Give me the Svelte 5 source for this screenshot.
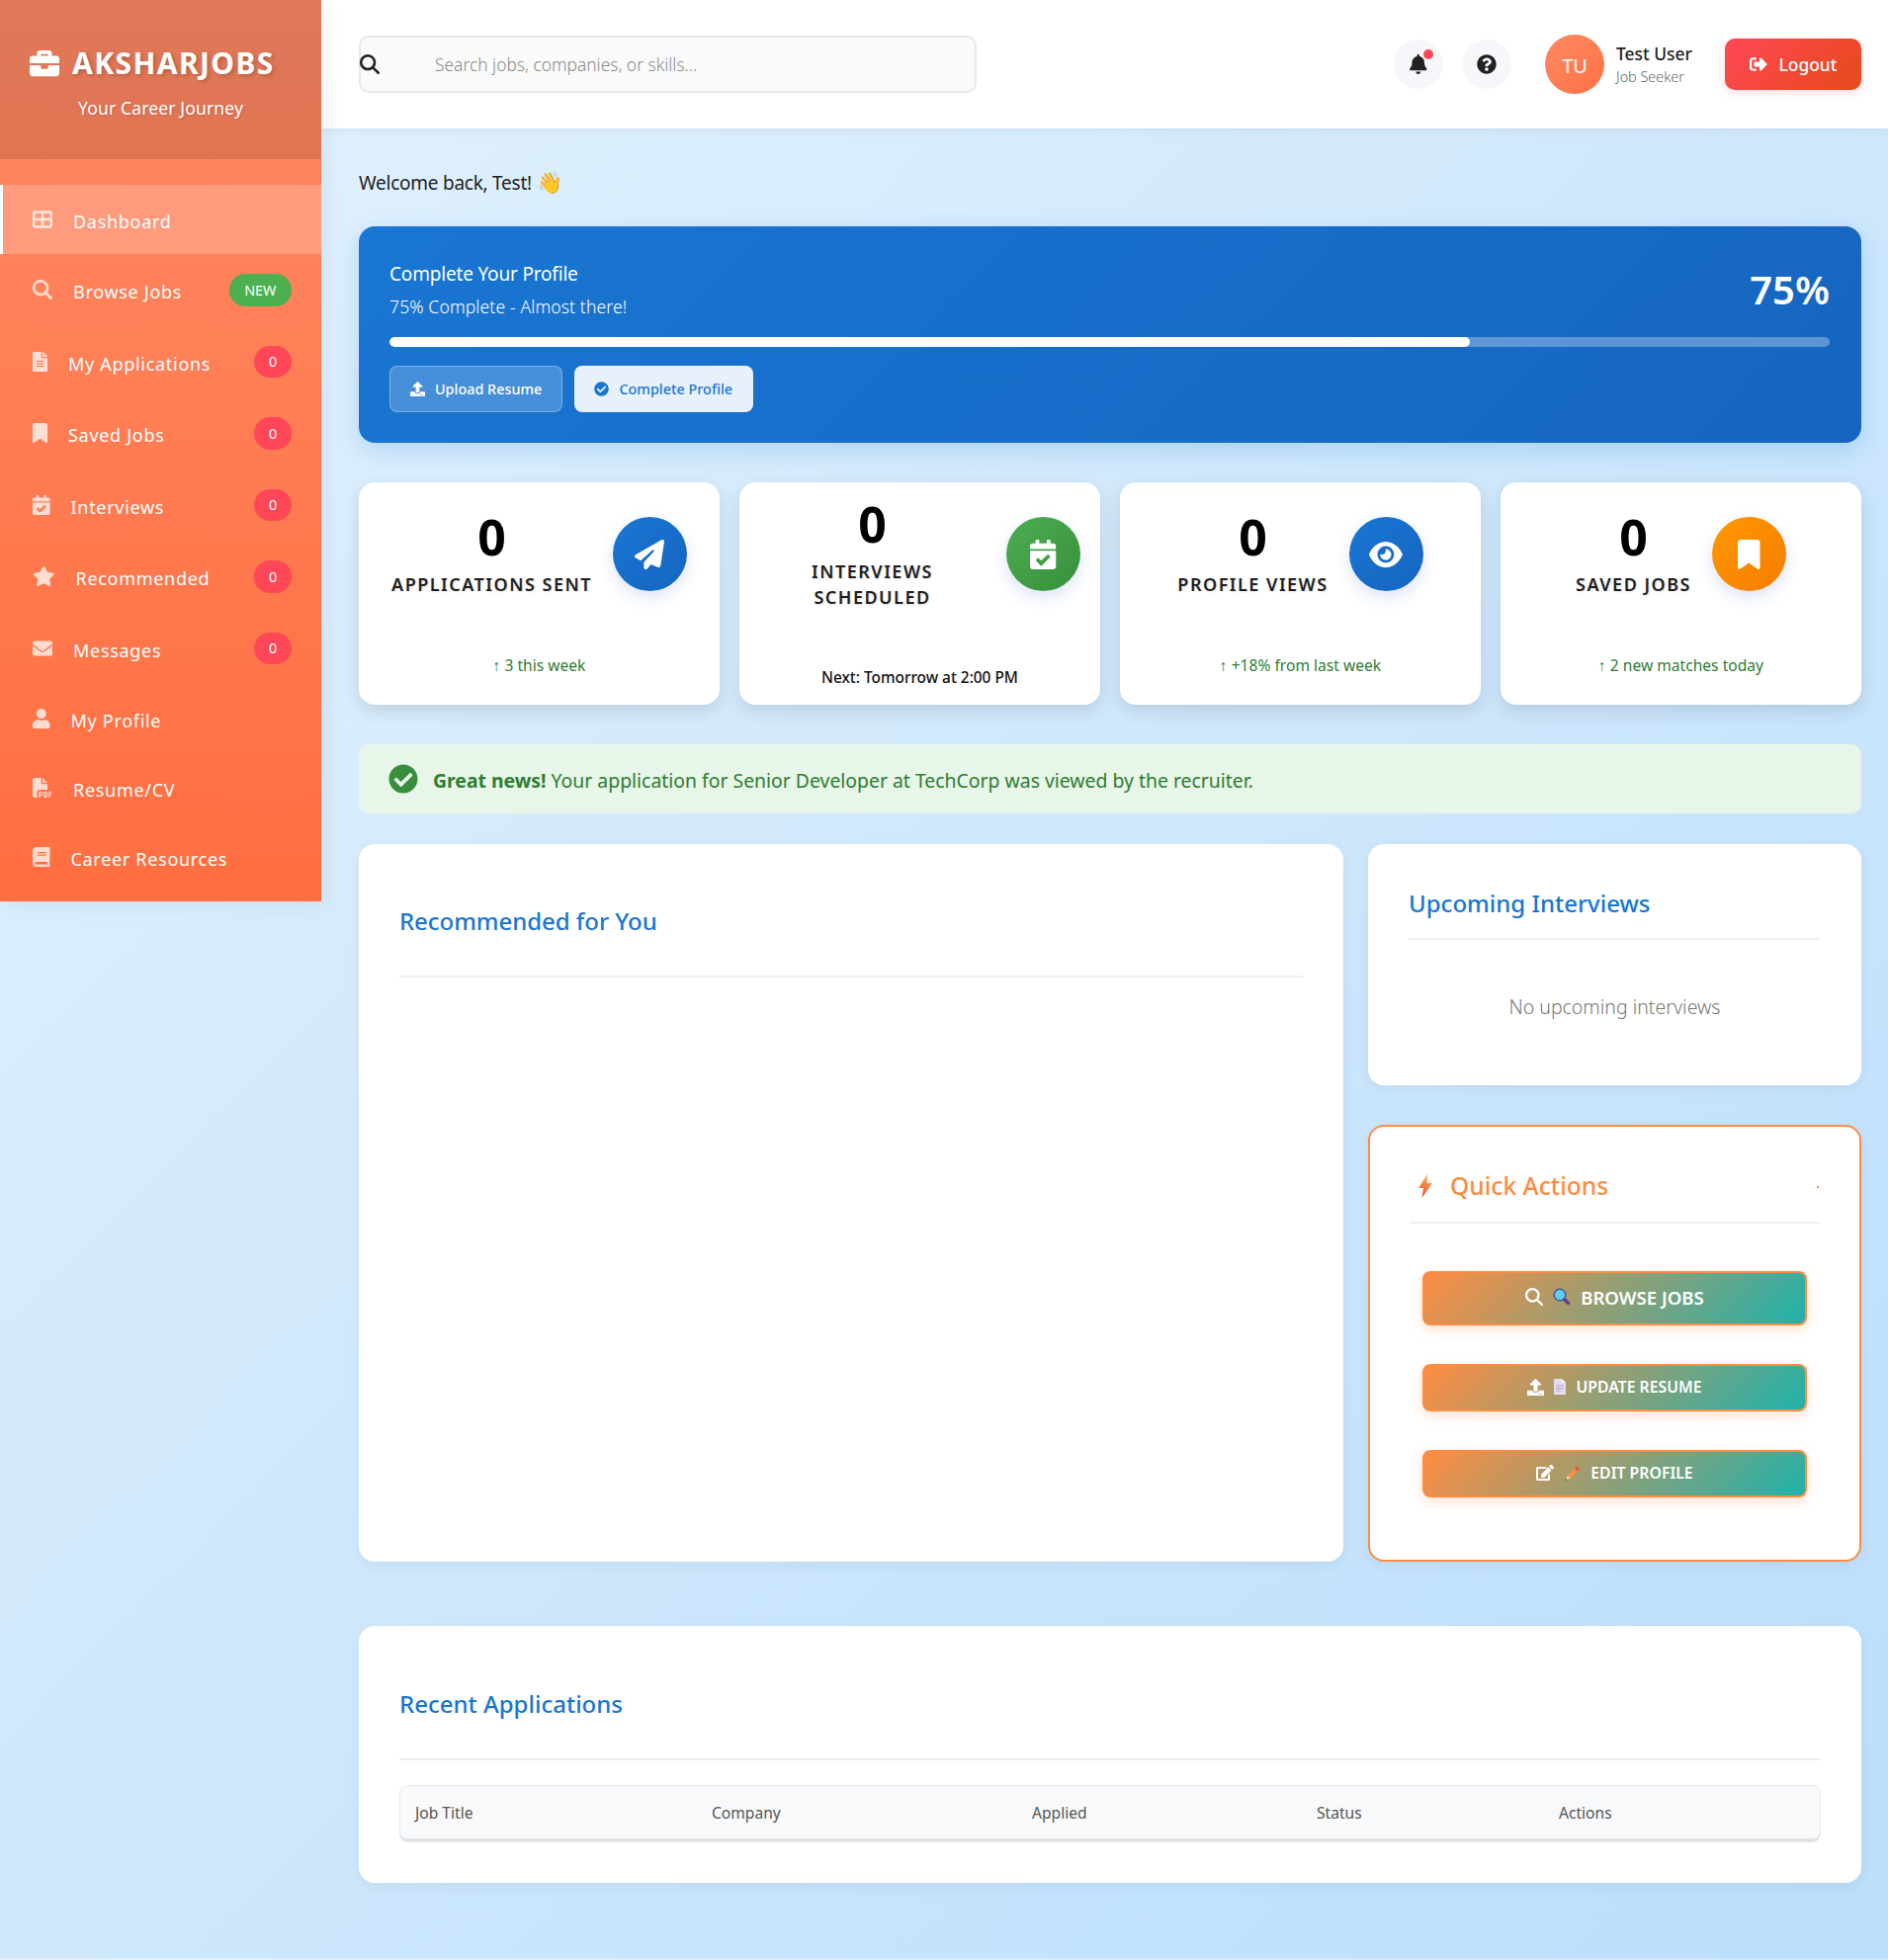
<script>
  const P = {
    briefcase: [512, 'M320 336c0 8.84-7.16 16-16 16h-96c-8.84 0-16-7.16-16-16v-48H0v144c0 25.6 22.4 48 48 48h416c25.6 0 48-22.4 48-48V288H320v48zm144-208h-80V80c0-25.6-22.4-48-48-48H176c-25.6 0-48 22.4-48 48v48H48c-25.6 0-48 22.4-48 48v80h512v-80c0-25.6-22.4-48-48-48zm-144 0H192V96h128v32z'],
    grid: [512, 'M448 96V224H288V96H448zm0 192V416H288V288H448zM224 224H64V96H224V224zM64 288H224V416H64V288zM64 32C28.7 32 0 60.7 0 96V416c0 35.3 28.7 64 64 64H448c35.3 0 64-28.7 64-64V96c0-35.3-28.7-64-64-64H64z'],
    search: [512, 'M416 208c0 45.9-14.9 88.3-40 122.7L502.6 457.4c12.5 12.5 12.5 32.8 0 45.3s-32.8 12.5-45.3 0L330.7 376c-34.4 25.2-76.8 40-122.7 40C93.1 416 0 322.9 0 208S93.1 0 208 0S416 93.1 416 208zM208 352a144 144 0 1 0 0-288 144 144 0 1 0 0 288z'],
    file: [384, 'M224 136V0H24C10.7 0 0 10.7 0 24v464c0 13.3 10.7 24 24 24h336c13.3 0 24-10.7 24-24V160H248c-13.2 0-24-10.8-24-24zm64 236c0 6.6-5.4 12-12 12H108c-6.6 0-12-5.4-12-12v-8c0-6.6 5.4-12 12-12h168c6.6 0 12 5.4 12 12v8zm0-64c0 6.6-5.4 12-12 12H108c-6.6 0-12-5.4-12-12v-8c0-6.6 5.4-12 12-12h168c6.6 0 12 5.4 12 12v8zm0-72v8c0 6.6-5.4 12-12 12H108c-6.6 0-12-5.4-12-12v-8c0-6.6 5.4-12 12-12h168c6.6 0 12 5.4 12 12zm96-114.1v6.1H256V0h6.1c6.4 0 12.5 2.5 17 7l97.9 98c4.5 4.5 7 10.6 7 16.9z'],
    bookmark: [384, 'M0 48V487.7C0 501.1 10.9 512 24.3 512c5 0 9.9-1.5 14-4.4L192 400 345.7 507.6c4.1 2.9 9 4.4 14 4.4c13.4 0 24.3-10.9 24.3-24.3V48c0-26.5-21.5-48-48-48H48C21.5 0 0 21.5 0 48z'],
    calendar: [448, 'M436 160H12c-6.627 0-12-5.373-12-12v-36c0-26.51 21.49-48 48-48h48V12c0-6.627 5.373-12 12-12h40c6.627 0 12 5.373 12 12v52h128V12c0-6.627 5.373-12 12-12h40c6.627 0 12 5.373 12 12v52h48c26.51 0 48 21.49 48 48v36c0 6.627-5.373 12-12 12zM12 192h424c6.627 0 12 5.373 12 12v260c0 26.51-21.49 48-48 48H48c-26.51 0-48-21.49-48-48V204c0-6.627 5.373-12 12-12zm333.296 95.947l-28.169-28.398c-4.667-4.705-12.265-4.736-16.97-.068L194.12 364.665l-45.98-46.352c-4.667-4.705-12.266-4.736-16.971-.068l-28.397 28.17c-4.705 4.667-4.736 12.265-.068 16.97l82.601 83.269c4.667 4.705 12.265 4.736 16.97.068l142.953-141.805c4.705-4.667 4.736-12.265.068-16.97z'],
    star: [576, 'M259.3 17.8L194 150.2 47.9 171.5c-26.2 3.8-36.7 36.1-17.7 54.6l105.7 103-25 145.5c-4.5 26.3 23.2 46 46.4 33.7L288 439.6l130.7 68.7c23.2 12.2 50.9-7.4 46.4-33.7l-25-145.5 105.7-103c19-18.5 8.5-50.8-17.7-54.6L382 150.2 316.7 17.8c-11.7-23.6-45.6-23.9-57.4 0z'],
    envelope: [512, 'M502.3 190.8c3.9-3.1 9.7-.2 9.7 4.7V400c0 26.5-21.5 48-48 48H48c-26.5 0-48-21.5-48-48V195.6c0-5 5.7-7.8 9.7-4.7 22.4 17.4 52.1 39.5 154.1 113.6 21.1 15.4 56.7 47.8 92.2 47.6 35.7.3 72-32.8 92.3-47.6 102-74.1 131.6-96.3 154-113.7zM256 320c23.2.4 56.6-29.2 73.4-41.4 132.7-96.3 142.8-104.7 173.4-128.7 5.8-4.5 9.2-11.5 9.2-18.9v-19c0-26.5-21.5-48-48-48H48C21.5 64 0 85.5 0 112v19c0 7.4 3.4 14.3 9.2 18.9 30.6 23.9 40.7 32.4 173.4 128.7 16.8 12.2 50.2 41.8 73.4 41.4z'],
    user: [448, 'M224 256c70.7 0 128-57.3 128-128S294.7 0 224 0 96 57.3 96 128s57.3 128 128 128zm89.6 32h-16.7c-22.2 10.2-46.9 16-72.9 16s-50.6-5.8-72.9-16h-16.7C60.2 288 0 348.2 0 422.4V464c0 26.5 21.5 48 48 48h352c26.5 0 48-21.5 48-48v-41.6c0-74.2-60.2-134.4-134.4-134.4z'],
    pdf: [512, 'M0 64C0 28.7 28.7 0 64 0H224V128c0 17.7 14.3 32 32 32H384V304H176c-35.3 0-64 28.7-64 64V512H64c-35.3 0-64-28.7-64-64V64zm384 64H256V0L384 128zM176 352h32c30.9 0 56 25.1 56 56s-25.1 56-56 56H192v32c0 8.8-7.2 16-16 16s-16-7.2-16-16V448 368c0-8.8 7.2-16 16-16zm32 80c13.3 0 24-10.7 24-24s-10.7-24-24-24H192v48h16zm96-80h32c26.5 0 48 21.5 48 48v64c0 26.5-21.5 48-48 48H304c-8.8 0-16-7.2-16-16V368c0-8.8 7.2-16 16-16zm32 128c8.8 0 16-7.2 16-16V400c0-8.8-7.2-16-16-16H320v96h16zm80-112c0-8.8 7.2-16 16-16h48c8.8 0 16 7.2 16 16s-7.2 16-16 16H448v32h32c8.8 0 16 7.2 16 16s-7.2 16-16 16H448v48c0 8.8-7.2 16-16 16s-16-7.2-16-16V432 368z'],
    book: [448, 'M448 360V24c0-13.3-10.7-24-24-24H96C43 0 0 43 0 96v320c0 53 43 96 96 96h328c13.3 0 24-10.7 24-24v-16c0-7.5-3.5-14.3-8.9-18.7-4.2-15.4-4.2-59.3 0-74.7 5.4-4.3 8.9-11.1 8.9-18.6zM128 134c0-3.3 2.7-6 6-6h212c3.3 0 6 2.7 6 6v20c0 3.3-2.7 6-6 6H134c-3.3 0-6-2.7-6-6v-20zm0 64c0-3.3 2.7-6 6-6h212c3.3 0 6 2.7 6 6v20c0 3.3-2.7 6-6 6H134c-3.3 0-6-2.7-6-6v-20zm253.4 250H96c-17.7 0-32-14.3-32-32 0-17.6 14.4-32 32-32h285.4c-1.9 17.1-1.9 46.9 0 64z'],
    bell: [448, 'M224 0c-17.7 0-32 14.3-32 32V51.2C119 66 64 130.6 64 208v18.8c0 47-17.3 92.4-48.5 127.6l-7.4 8.3c-8.4 9.4-10.4 22.9-5.3 34.4S19.4 416 32 416H416c12.6 0 24-7.4 29.2-18.9s3.1-25-5.3-34.4l-7.4-8.3C401.3 319.2 384 273.9 384 226.8V208c0-77.4-55-142-128-156.8V32c0-17.7-14.3-32-32-32zm45.3 493.3c12-12 18.7-28.3 18.7-45.3H224 160c0 17 6.7 33.3 18.7 45.3s28.3 18.7 45.3 18.7s33.3-6.7 45.3-18.7z'],
    help: [512, 'M504 256c0 136.997-111.043 248-248 248S8 392.997 8 256C8 119.083 119.043 8 256 8s248 111.083 248 248zM262.655 90c-54.497 0-89.255 22.957-116.549 63.758-3.536 5.286-2.353 12.415 2.715 16.258l34.699 26.31c5.205 3.947 12.621 3.008 16.665-2.122 17.864-22.658 30.113-35.797 57.303-35.797 20.429 0 45.698 13.148 45.698 32.958 0 14.976-12.363 22.667-32.534 33.976C247.128 238.528 216 254.941 216 296v4c0 6.627 5.373 12 12 12h56c6.627 0 12-5.373 12-12v-1.333c0-28.462 83.186-29.647 83.186-106.667 0-58.002-60.165-102-116.531-102zM256 338c-25.365 0-46 20.635-46 46 0 25.364 20.635 46 46 46s46-20.636 46-46c0-25.365-20.635-46-46-46z'],
    logout: [512, 'M497 273L329 441c-15 15-41 4.5-41-17v-96H152c-13.3 0-24-10.7-24-24v-96c0-13.3 10.7-24 24-24h136V88c0-21.4 25.9-32 41-17l168 168c9.3 9.4 9.3 24.6 0 34zM192 436v-40c0-6.6-5.4-12-12-12H96c-17.7 0-32-14.3-32-32V160c0-17.7 14.3-32 32-32h84c6.6 0 12-5.4 12-12V76c0-6.6-5.4-12-12-12H96c-53 0-96 43-96 96v192c0 53 43 96 96 96h84c6.6 0 12-5.4 12-12z'],
    upload: [512, 'M296 384h-80c-13.3 0-24-10.7-24-24V192h-87.7c-17.8 0-26.7-21.5-14.1-34.1L242.3 5.7c7.5-7.5 19.8-7.5 27.3 0l152.2 152.2c12.6 12.6 3.7 34.1-14.1 34.1H320v168c0 13.3-10.7 24-24 24zm216-8v112c0 13.3-10.7 24-24 24H24c-13.3 0-24-10.7-24-24V376c0-13.3 10.7-24 24-24h136v8c0 30.9 25.1 56 56 56h80c30.9 0 56-25.1 56-56v-8h136c13.3 0 24 10.7 24 24zm-124 88c0-11-9-20-20-20s-20 9-20 20 9 20 20 20 20-9 20-20zm64 0c0-11-9-20-20-20s-20 9-20 20 9 20 20 20 20-9 20-20z'],
    check: [512, 'M504 256c0 136.967-111.033 248-248 248S8 392.967 8 256 119.033 8 256 8s248 111.033 248 248zM227.314 387.314l184-184c6.248-6.248 6.248-16.379 0-22.627l-22.627-22.627c-6.248-6.249-16.379-6.249-22.628 0L216 308.118l-70.059-70.059c-6.248-6.248-16.379-6.248-22.628 0l-22.627 22.627c-6.248 6.248-6.248 16.379 0 22.627l104 104c6.249 6.249 16.379 6.249 22.628.001z'],
    plane: [512, 'M498.1 5.6c10.1 7 15.4 19.1 13.5 31.2l-64 416c-1.5 9.7-7.4 18.2-16 23s-18.9 5.4-28 1.6L284 427.7l-68.5 74.1c-8.9 9.7-22.9 12.9-35.2 8.1S160 493.2 160 480V396.4c0-4 1.5-7.8 4.2-10.7L331.8 202.8c5.8-6.3 5.6-16-.4-22s-15.7-6.4-22-.7L106 360.8 17.7 316.6C7.1 311.3 .3 300.7 0 288.9s5.9-22.8 16.1-28.7l448-256c10.7-6.1 23.9-5.5 34 1.4z'],
    eye: [576, 'M288 32c-80.8 0-145.5 36.8-192.6 80.6C48.6 156 17.3 208 2.5 243.7c-3.3 7.9-3.3 16.7 0 24.6C17.3 304 48.6 356 95.4 399.4C142.5 443.2 207.2 480 288 480s145.5-36.8 192.6-80.6c46.8-43.5 78.1-95.4 93-131.1c3.3-7.9 3.3-16.7 0-24.6c-14.9-35.7-46.2-87.7-93-131.1C433.5 68.8 368.8 32 288 32zM144 256a144 144 0 1 1 288 0 144 144 0 1 1 -288 0zm144-64c0 35.3-28.7 64-64 64c-7.1 0-13.9-1.2-20.3-3.3c-5.5-1.8-11.9 1.6-11.7 7.4c.3 6.9 1.3 13.8 3.2 20.7c13.7 51.2 66.4 81.6 117.6 67.9s81.6-66.4 67.9-117.6c-11.1-41.5-47.8-69.4-88.6-71.1c-5.8-.2-9.2 6.1-7.4 11.7c2.1 6.4 3.3 13.2 3.3 20.3z'],
    edit: [576, 'M402.6 83.2l90.2 90.2c3.8 3.8 3.8 10 0 13.8L274.4 405.6l-92.8 10.3c-12.4 1.4-22.9-9.1-21.5-21.5l10.3-92.8L388.8 83.2c3.8-3.8 10-3.8 13.8 0zm162-22.9l-48.8-48.8c-15.2-15.2-39.9-15.2-55.2 0l-35.4 35.4c-3.8 3.8-3.8 10 0 13.8l90.2 90.2c3.8 3.8 10 3.8 13.8 0l35.4-35.4c15.2-15.3 15.2-40 0-55.2zM384 346.2V448H64V128h229.8c3.2 0 6.2-1.3 8.5-3.5l40-40c7.6-7.6 2.2-20.5-8.5-20.5H48C21.5 64 0 85.5 0 112v352c0 26.5 21.5 48 48 48h352c26.5 0 48-21.5 48-48V306.2c0-10.7-12.9-16-20.5-8.5l-40 40c-2.2 2.3-3.5 5.3-3.5 8.5z']
  };

  const nav = [
    { icon: 'grid', label: 'Dashboard', active: true },
    { icon: 'search', label: 'Browse Jobs', badge: 'NEW', isNew: true },
    { icon: 'file', label: 'My Applications', badge: '0' },
    { icon: 'bookmark', label: 'Saved Jobs', badge: '0' },
    { icon: 'calendar', label: 'Interviews', badge: '0' },
    { icon: 'star', label: 'Recommended', badge: '0' },
    { icon: 'envelope', label: 'Messages', badge: '0' },
    { icon: 'user', label: 'My Profile' },
    { icon: 'pdf', label: 'Resume/CV' },
    { icon: 'book', label: 'Career Resources' }
  ];

  const stats = [
    { n: '0', label: 'APPLICATIONS SENT', icon: 'plane', tone: 'blue', foot: '↑ 3 this week' },
    { n: '0', label: 'INTERVIEWS SCHEDULED', icon: 'calendar', tone: 'green', foot: 'Next: Tomorrow at 2:00 PM', dark: true },
    { n: '0', label: 'PROFILE VIEWS', icon: 'eye', tone: 'blue', foot: '↑ +18% from last week' },
    { n: '0', label: 'SAVED JOBS', icon: 'bookmark', tone: 'orange', foot: '↑ 2 new matches today' }
  ];

  const cols = ['Job Title', 'Company', 'Applied', 'Status', 'Actions'];
</script>

{#snippet icon(name, size = 20)}
  <svg class="ic" width={(P[name][0] / 512) * size} height={size} viewBox="0 0 {P[name][0]} 512" fill="currentColor" aria-hidden="true"><path d={P[name][1]} /></svg>
{/snippet}

<div class="app">
  <aside class="sidebar">
    <div class="brand">
      <div class="logo">{@render icon('briefcase', 30)}<span>AKSHARJOBS</span></div>
      <p class="tag">Your Career Journey</p>
    </div>
    <nav>
      {#each nav as item}
        <a class="row" class:active={item.active} class:tall={item.badge} href="#top">
          <span class="nav-ic">{@render icon(item.icon)}</span>
          <span class="nav-label">{item.label}</span>
          {#if item.badge}
            <span class="badge" class:new={item.isNew}>{item.badge}</span>
          {/if}
        </a>
      {/each}
    </nav>
  </aside>

  <div class="main">
    <header class="topbar">
      <div class="search">
        <span class="search-ic">{@render icon('search')}</span>
        <span class="placeholder">Search jobs, companies, or skills...</span>
      </div>
      <div class="top-right">
        <button class="round">{@render icon('bell')}<i class="dot"></i></button>
        <button class="round">{@render icon('help')}</button>
        <div class="avatar">TU</div>
        <div class="who"><strong>Test User</strong><small>Job Seeker</small></div>
        <button class="logout">{@render icon('logout', 18)}<span>Logout</span></button>
      </div>
    </header>

    <main class="content">
      <h1 class="welcome">Welcome back, Test! <span class="wave">👋</span></h1>

      <section class="profile">
        <div class="profile-top">
          <div>
            <h2>Complete Your Profile</h2>
            <p>75% Complete - Almost there!</p>
          </div>
          <div class="pct">75%</div>
        </div>
        <div class="track"><div class="fill" style="width: 75%"></div></div>
        <div class="profile-btns">
          <button class="pbtn ghost">{@render icon('upload', 15)}<span>Upload Resume</span></button>
          <button class="pbtn solid">{@render icon('check', 15)}<span>Complete Profile</span></button>
        </div>
      </section>

      <section class="stats">
        {#each stats as s}
          <article class="stat">
            <div class="stat-head">
              <div class="stat-text">
                <div class="num">{s.n}</div>
                <div class="lab">{s.label}</div>
              </div>
              <div class="circle {s.tone}">{@render icon(s.icon, 30)}</div>
            </div>
            <div class="foot" class:dark={s.dark}>{s.foot}</div>
          </article>
        {/each}
      </section>

      <div class="alert">
        <span class="alert-ic">{@render icon('check', 30)}</span>
        <span class="alert-text"><strong>Great news!</strong> Your application for Senior Developer at TechCorp was viewed by the recruiter.</span>
      </div>

      <div class="cols">
        <section class="panel rec">
          <h3 class="h-rec">Recommended for You</h3>
        </section>
        <div class="side">
          <section class="panel up">
            <h3 class="h-up">Upcoming Interviews</h3>
            <p class="empty">No upcoming interviews</p>
          </section>
          <section class="panel quick">
            <h3 class="h-quick">
              <svg class="bolt" width="14" height="24" viewBox="0 0 14 24" aria-hidden="true">
                <defs><linearGradient id="bg" x1="0.6" y1="0" x2="0.4" y2="1"><stop offset="0" stop-color="#ffb347" /><stop offset="1" stop-color="#ef4b3c" /></linearGradient></defs>
                <path d="M9 0 L0 14 H5 L3.5 24 L14 9 H8.5 Z" fill="url(#bg)" />
              </svg>
              <span>Quick Actions</span>
              <i class="speck"></i>
            </h3>
            <div class="qa">
              <button class="qbtn big">
                {@render icon('search', 18)}
                <svg width="18" height="18" viewBox="0 0 18 18" aria-hidden="true">
                  <path d="M11.5 11.5 L15.5 15.5" stroke="#6b3f8e" stroke-width="3.6" stroke-linecap="round" />
                  <circle cx="7" cy="7" r="5.8" fill="#5ecdee" stroke="#3c4a9c" stroke-width="1.3" />
                </svg>
                <span>BROWSE JOBS</span>
              </button>
              <button class="qbtn">
                {@render icon('upload', 17)}
                <svg width="12" height="16" viewBox="0 0 12 16" aria-hidden="true">
                  <path d="M0 0 H8 L12 4 V16 H0 Z" fill="#e5ddef" />
                  <path d="M8 0 L12 4 H8 Z" fill="#f6f2fa" />
                  <path d="M2 7 H10 M2 9.5 H10 M2 12 H7" stroke="#a89dbb" stroke-width="0.9" />
                </svg>
                <span>UPDATE RESUME</span>
              </button>
              <button class="qbtn">
                {@render icon('edit', 16)}
                <svg width="17" height="17" viewBox="0 0 17 17" aria-hidden="true">
                  <path d="M4 10.5 L11 3.5 L14 6.5 L7 13.5 Z" fill="#ff8c42" />
                  <path d="M11 3.5 L13 1.2 L16 4.2 L14 6.5 Z" fill="#f0504a" />
                  <path d="M4 10.5 L7 13.5 L1 16 Z" fill="#f3c9a0" />
                  <path d="M2.3 14 L3.4 15.2 L1 16 Z" fill="#3c2f3a" />
                </svg>
                <span>EDIT PROFILE</span>
              </button>
            </div>
          </section>
        </div>
      </div>

      <section class="panel recent">
        <h3 class="h-recent">Recent Applications</h3>
        <div class="table-wrap">
          <table>
            <thead>
              <tr>{#each cols as c}<th>{c}</th>{/each}</tr>
            </thead>
          </table>
        </div>
      </section>
    </main>
  </div>
</div>

<style>
  :global(body) {
    margin: 0;
    background: linear-gradient(135deg, #e3f2fd 0%, #bbdefb 100%);
    font-family: "Noto Sans", "Open Sans", sans-serif;
    color: #222;
  }
  * { box-sizing: border-box; }
  h1, h2, h3, p { margin: 0; font-weight: 400; }
  button { font-family: inherit; border: 0; cursor: pointer; }
  .ic { display: block; flex: none; }

  .app { display: flex; align-items: flex-start; height: 1981px; }

  .sidebar {
    width: 325px;
    flex: none;
    height: 912px;
    color: #fff;
    background: linear-gradient(180deg, #ff8a65, #ff6e40);
    box-shadow: 4px 4px 20px rgba(0, 0, 0, 0.06);
    position: relative;
    z-index: 2;
  }
  .brand {
    height: 161px;
    padding-top: 46px;
    text-align: center;
    background: rgba(0, 0, 0, 0.12);
  }
  .logo {
    display: flex;
    align-items: center;
    gap: 13px;
    padding-left: 30px;
    font-size: 30px;
    line-height: 36px;
    font-weight: 700;
    letter-spacing: 1.4px;
    text-shadow: 2px 2px 4px rgba(0, 0, 0, 0.2);
  }
  .tag {
    margin-top: 15px;
    font-size: 17.6px;
    line-height: 24px;
    letter-spacing: 0.1px;
    text-shadow: 1px 1px 2px rgba(0, 0, 0, 0.15);
  }
  nav { padding-top: 26px; }
  .row {
    display: flex;
    align-items: center;
    height: 70px;
    padding: 0 30px;
    border-left: 3px solid transparent;
    color: #fff;
    text-decoration: none;
    font-size: 18px;
    letter-spacing: 0.7px;
  }
  .row.tall { height: 72.5px; }
  .row.active { background: rgba(255, 255, 255, 0.2); border-left-color: #fff; }
  .nav-ic { opacity: 0.75; margin-right: 21px; }
  .nav-label { flex: 1; position: relative; top: 2px; }
  .badge {
    min-width: 38px;
    height: 32.5px;
    padding: 0 13px;
    border-radius: 16px;
    background: #ff4757;
    display: flex;
    align-items: center;
    justify-content: center;
    font-size: 14.4px;
    font-weight: 400;
    letter-spacing: 0;
  }
  .badge.new { background: #4caf50; padding: 0 15.5px; }

  .main { flex: 1; min-width: 0; }
  .topbar {
    height: 130px;
    background: #fff;
    padding: 0 27px 0 38px;
    display: flex;
    align-items: center;
    justify-content: space-between;
    box-shadow: 0 2px 10px rgba(0, 0, 0, 0.06);
  }
  .search {
    width: 625px;
    height: 58px;
    border: 2px solid #e8e8e8;
    border-radius: 10px;
    background: #fafafa;
    display: flex;
    align-items: center;
    position: relative;
  }
  .search-ic { position: absolute; left: -1px; top: 17px; color: #222; }
  .placeholder { margin-left: 75px; font-size: 17.4px; font-weight: 300; color: #8a8a8a; }
  .top-right { display: flex; align-items: center; }
  .round {
    width: 50px;
    height: 50px;
    border-radius: 50%;
    background: #f5f7fa;
    color: #222;
    display: flex;
    align-items: center;
    justify-content: center;
    position: relative;
    margin-right: 19px;
    padding: 0;
  }
  .round + .round { margin-right: 34px; }
  .dot {
    position: absolute;
    width: 10px;
    height: 10px;
    border-radius: 50%;
    background: #ff4757;
    top: 10px;
    right: 10px;
  }
  .avatar {
    width: 60px;
    height: 60px;
    border-radius: 50%;
    background: linear-gradient(135deg, #ff8a65, #ff7043);
    color: #fff;
    font-size: 20px;
    padding-top: 2px;
    display: flex;
    align-items: center;
    justify-content: center;
    margin-right: 12px;
  }
  .who { display: flex; flex-direction: column; width: 110px; padding-top: 2px; }
  .who strong { font-size: 17.4px; line-height: 24px; font-weight: 500; color: #222; }
  .who small { font-size: 14.4px; line-height: 24px; font-weight: 300; color: #666; }
  .logout {
    width: 138px;
    height: 52px;
    border-radius: 10px;
    background: linear-gradient(135deg, #ff4757, #e64a19);
    color: #fff;
    font-size: 17.4px;
    font-weight: 500;
    display: flex;
    align-items: center;
    justify-content: center;
    gap: 12px;
    box-shadow: 0 3px 8px rgba(255, 71, 87, 0.2);
  }

  .content { padding: 40px 27px 0 38px; }
  .welcome { height: 30px; font-size: 19px; letter-spacing: -0.25px; line-height: 30px; color: #222; margin-bottom: 29px; }
  .wave { font-size: 21px; line-height: 0; }

  .profile {
    height: 219px;
    border-radius: 16px;
    padding: 31px 32px 0 31px;
    background: linear-gradient(135deg, #1976d2, #1565c0);
    color: #fff;
    box-shadow: 0 8px 24px rgba(25, 118, 210, 0.2);
  }
  .profile-top { display: flex; justify-content: space-between; align-items: center; height: 66px; }
  .profile h2 { font-size: 19px; letter-spacing: -0.18px; line-height: 34px; }
  .profile p { font-size: 17.6px; letter-spacing: 0.1px; line-height: 32px; font-weight: 300; }
  .pct { font-size: 40px; font-weight: 600; line-height: 1; }
  .track { height: 10px; margin-top: 15px; border-radius: 5px; background: rgba(255, 255, 255, 0.3); overflow: hidden; }
  .fill { height: 100%; background: #fff; border-radius: 5px; }
  .profile-btns { display: flex; gap: 12px; margin-top: 19px; }
  .pbtn {
    height: 47px;
    padding: 0 20px;
    border-radius: 8px;
    display: flex;
    align-items: center;
    gap: 10px;
    font-size: 14.4px;
    font-weight: 500;
  }
  .ghost { background: rgba(255, 255, 255, 0.2); border: 1px solid rgba(255, 255, 255, 0.3); color: #fff; }
  .solid { background: rgba(255, 255, 255, 0.9); color: #1976d2; padding-right: 21px; }

  .stats { display: grid; grid-template-columns: repeat(4, 1fr); gap: 20px; margin-top: 40px; }
  .stat {
    height: 225px;
    background: #fff;
    border-radius: 16px;
    padding: 15px 20px 16.5px;
    display: flex;
    flex-direction: column;
    justify-content: center;
    box-shadow: 0 6px 18px rgba(0, 0, 0, 0.12);
  }
  .stat-head { display: flex; justify-content: center; align-items: center; gap: 21px; }
  .stat-text { text-align: center; min-width: 0; transform: translateY(-1.5px); }
  .num { font-size: 50px; line-height: 56px; font-weight: 700; color: #000; margin-bottom: 7px; }
  .lab { font-size: 18px; line-height: 26px; font-weight: 600; letter-spacing: 1.5px; color: #1f1f1f; text-shadow: 1px 1px 2px rgba(0, 0, 0, 0.12); }
  .circle {
    width: 75px;
    height: 75px;
    flex: none;
    border-radius: 50%;
    color: #fff;
    display: flex;
    align-items: center;
    justify-content: center;
    box-shadow: 0 6px 16px rgba(25, 70, 210, 0.15);
  }
  .blue { background: linear-gradient(135deg, #1976d2, #1565c0); }
  .green { background: linear-gradient(135deg, #4caf50, #388e3c); }
  .orange { background: linear-gradient(135deg, #ff9800, #f57c00); }
  .foot { margin-top: 56.5px; text-align: center; font-size: 15.6px; line-height: 22px; color: #2e7d32; }
  .foot.dark { color: #111; font-weight: 500; font-size: 15.4px; }

  .alert {
    height: 70px;
    margin-top: 40px;
    padding: 0 30px;
    border-radius: 10px;
    background: #e8f5e9;
    color: #2e7d32;
    font-size: 19.4px;
    display: flex;
    align-items: center;
    gap: 15px;
  }
  .alert-text { padding-top: 3px; }
  .alert-ic { color: #388e3c; }

  .cols { display: grid; grid-template-columns: 996px 1fr; gap: 25px; margin-top: 31px; }
  .panel { background: #fff; border-radius: 16px; box-shadow: 0 4px 14px rgba(0, 0, 0, 0.05); }
  .panel h3 { color: #1976d2; font-size: 24px; font-weight: 500; border-bottom: 2px solid #f0f0f0; }
  .rec { height: 726px; padding: 0 41px; }
  .h-rec { padding-top: 60px; height: 135px; line-height: 36px; letter-spacing: -0.05px; }
  .side { display: flex; flex-direction: column; gap: 40px; }
  .up { height: 244px; padding: 0 41px; }
  .h-up { padding-top: 42px; height: 97px; line-height: 36px; }
  .empty { text-align: center; margin-top: 55px; font-size: 19.5px; line-height: 26px; font-weight: 300; color: #777; }
  .quick { flex: 1; border: 2px solid #ff8c42; padding: 0 40px; }
  .panel .h-quick {
    height: 98px;
    padding-top: 42px;
    color: #ff8c42;
    line-height: 36px;
    font-size: 24.6px;
    display: flex;
    align-items: flex-start;
    position: relative;
    padding-left: 9px;
    gap: 18px;
  }
  .bolt { margin-top: 6px; flex: none; }
  .speck { position: absolute; right: 1px; top: 60px; width: 2px; height: 2px; background: #ff8c42; }
  .qa { padding: 48px 13px 0; display: flex; flex-direction: column; gap: 39px; }
  .qbtn {
    height: 48px;
    border: 2px solid #ff8c42;
    border-radius: 8px;
    background: linear-gradient(135deg, #ff8c42, #20b2aa);
    color: #fff;
    font-size: 15.8px;
    font-weight: 600;
    display: flex;
    align-items: center;
    justify-content: center;
    gap: 10px;
    box-shadow: 0 4px 12px rgba(255, 140, 66, 0.25);
    padding: 0 0 2px;
  }
  .qbtn.big { height: 55px; font-size: 18.6px; padding-bottom: 3px; }

  .recent { height: 260px; margin-top: 65px; padding: 0 41px; }
  .h-recent { padding-top: 61px; height: 136px; line-height: 36px; }
  .table-wrap {
    margin-top: 25px;
    height: 58px;
    border: 1px solid #e6eaf0;
    border-radius: 8px;
    background: #f8f9fa;
    box-shadow: inset 0 -3px 0 #dfe2e4;
    overflow: hidden;
  }
  table { width: 100%; border-collapse: collapse; table-layout: fixed; }
  th { height: 54px; padding: 0 0 0 15px; text-align: left; font-size: 15.6px; font-weight: 400; color: #555; }
  th:nth-child(1) { width: 300px; }
  th:nth-child(2) { width: 324px; }
  th:nth-child(3) { width: 288px; }
  th:nth-child(4) { width: 245px; }
</style>
